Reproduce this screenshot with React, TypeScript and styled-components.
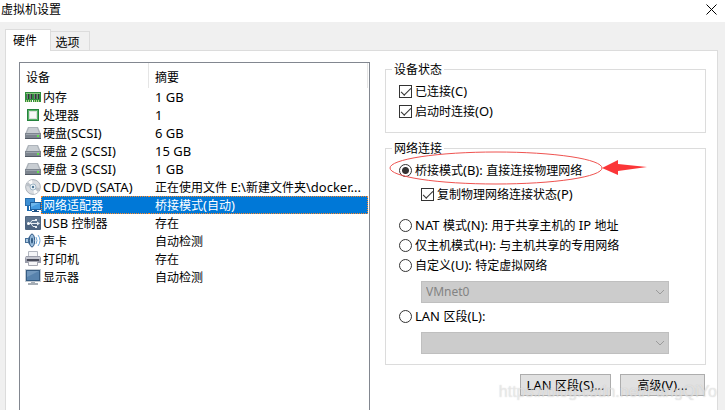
import React from "react";
import styled, { createGlobalStyle, css } from "styled-components";

const GlobalStyle = createGlobalStyle`
  * { box-sizing: border-box; }
  body {
    margin: 0;
    overflow: hidden;
    background: #f0f0f0;
    color: #000;
    font: 12px/18px "Noto Sans", "Noto Sans CJK SC", sans-serif;
  }
  button, input, select { font: inherit; color: inherit; margin: 0; }
`;

const Dialog = styled.main`
  position: relative;
  display: flex;
  flex-direction: column;
  height: 100vh;
  overflow: hidden;
`;

const TitleBar = styled.header`
  display: flex;
  align-items: center;
  justify-content: space-between;
  height: 22px;
  padding: 0 8px 3px 1px;
  flex: none;
  background: #fff;
`;

const Title = styled.h1`
  margin: 0;
  font-size: 12px;
  font-weight: 400;
`;

const CloseButton = styled.button`
  display: flex;
  width: 11px;
  height: 11px;
  padding: 0;
  border: 0;
  background: none;
`;

const TabBar = styled.div`
  display: flex;
  align-items: flex-end;
  flex: none;
  height: 29px;
  padding-left: 5px;
  position: relative;
  z-index: 1;
`;

const Tab = styled.button<{ $active?: boolean }>`
  padding: 0;
  border: 1px solid #dcdcdc;
  ${({ $active }) =>
    $active
      ? css`width: 46px; height: 22px; padding-right: 6px; border-bottom: 0; background: #fff;`
      : css`width: 39px; height: 20px; padding: 2px 5px 0 0; border-left: 0; background: #f0f0f0;`}
`;

const Panel = styled.section`
  flex: 1;
  display: grid;
  grid-template-columns: 351fr 321fr;
  column-gap: 15px;
  margin: -1px 7px 0 5px;
  padding: 11px 11px 0 13px;
  border: 1px solid #dcdcdc;
  border-bottom: 0;
  background: #fff;
`;

const DeviceList = styled.div`
  border: 1px solid #828790;
  border-bottom: 0;
  padding-right: 1px;
`;

const Table = styled.table`
  width: 100%;
  table-layout: fixed;
  border-collapse: separate;
  border-spacing: 0;
`;

const HeadCell = styled.th<{ $first?: boolean }>`
  width: ${({ $first }) => ($first ? "129px" : "auto")};
  height: 25px;
  padding: 4px 0 0 6px;
  border-right: 1px solid #e5e5e5;
  font-weight: 400;
  text-align: left;
`;

const Cell = styled.td`
  height: 18px;
  padding: 0;
`;

const DeviceName = styled.div`
  display: grid;
  grid-template-columns: 16px 1fr;
  padding-left: 5px;
`;

const CellText = styled.div<{ $selected?: boolean; $summary?: boolean }>`
  height: 18px;
  line-height: 20px;
  padding-left: ${({ $summary }) => ($summary ? "6px" : "2px")};
  overflow: hidden;
  white-space: nowrap;
  ${({ $selected, $summary }) =>
    $selected &&
    css`
      color: #fff;
      background: #0078d7;
      border: 1px dotted #ff8728;
      ${$summary ? "border-left: 0;" : "border-right: 0; padding-left: 1px;"}
      line-height: 18px;
    `}
`;

const Latin = styled.span`
  font-size: 13px;
  line-height: 1;
`;

const Settings = styled.div`
  display: flex;
  flex-direction: column;
  padding-top: 7px;
`;

const Group = styled.fieldset<{ $tall?: boolean }>`
  position: relative;
  min-width: 0;
  margin: 0 0 ${({ $tall }) => ($tall ? "9px" : "15px")};
  padding: ${({ $tall }) => ($tall ? "11px 36px 10px 13px" : "11px 13px 11px")};
  border: 1px solid #dcdcdc;
`;

const Legend = styled.legend`
  float: left;
  height: 18px;
  margin: -20px 0 0 -7px;
  padding: 0 2px;
  background: #fff;
`;

const Options = styled.div`
  clear: both;
  display: flex;
  flex-direction: column;
`;

const Option = styled.label<{ $space?: "nested" | "afterSelect" }>`
  display: flex;
  align-items: center;
  gap: 3px;
  height: 20px;
  white-space: nowrap;
  > span { padding-top: 2px; }
  ${({ $space }) => $space === "nested" && css`margin: 4px 0 11px 22px;`}
  ${({ $space }) => $space === "afterSelect" && css`margin-top: 3px;`}
`;

const CheckBox = styled.input`
  appearance: none;
  flex: none;
  display: block;
  width: 13px;
  height: 13px;
  border: 1px solid #333;
  background: #fff;
  &:checked::after {
    content: "";
    display: block;
    width: 9px;
    height: 4px;
    margin: 2px 0 0 1px;
    border: solid #333;
    border-width: 0 0 1px 1px;
    transform: rotate(-45deg);
  }
`;

const Radio = styled.input`
  appearance: none;
  flex: none;
  width: 13px;
  height: 13px;
  border: 1px solid #333;
  border-radius: 50%;
  background: #fff;
  &:checked {
    background: radial-gradient(circle, #333 3px, #fff 4px);
  }
`;

const SelectBox = styled.div`
  display: grid;
  align-items: center;
  height: 22px;
  margin: 6px 0 0 22px;
  > * { grid-area: 1 / 1; }
  > svg { justify-self: end; margin-right: 4px; pointer-events: none; }
`;

const Select = styled.select`
  appearance: none;
  width: 100%;
  height: 22px;
  padding: 0 4px;
  border: 1px solid #bfbfbf;
  border-radius: 0;
  background: #ccc;
  color: #838383;
  opacity: 1;
  font-size: 12px;
`;

const Actions = styled.div`
  display: flex;
  justify-content: flex-end;
  gap: 9px;
  padding-right: 1px;
`;

const ActionButton = styled.button<{ $wide?: boolean }>`
  width: ${({ $wide }) => ($wide ? "91px" : "85px")};
  height: 22px;
  padding: 2px 0 0;
  border: 1px solid #adadad;
  background: #e1e1e1;
  white-space: nowrap;
`;

const Annotation = styled.svg`
  position: absolute;
  left: 2px;
  top: 1px;
  pointer-events: none;
`;

const Watermark = styled.div`
  position: absolute;
  right: 8px;
  bottom: 8px;
  font: 16px/20px "Liberation Sans", sans-serif;
  color: rgba(255, 255, 255, 0.5);
  text-shadow: 0 0 1px rgba(150, 150, 150, 0.5);
  pointer-events: none;
`;

/* Chinese text is set at 12px; the Latin runs inside it are one pixel larger. */
const Mixed = ({ text }: { text: string }) => (
  <span>
    {text.split(/([\x20-\x7e]+)/).map((part, i) =>
      i % 2 ? <Latin key={i}>{part}</Latin> : part
    )}
  </span>
);

type IconName = "memory" | "cpu" | "disk" | "disc" | "network" | "usb" | "sound" | "printer" | "display";

const drawings: Record<IconName, React.ReactNode> = {
  memory: (
    <>
      <path d="M0 4h16v10H0z" fill="#2f8d3d" />
      <path d="M1 5h14v1H1z" fill="#86c97c" />
      <path d="M2 6h2v5H2zM5 6h2v5H5zM9 6h2v5H9zM12 6h2v5h-2z" fill="#33363a" />
      <path d="M2 6h1v5H2zM5 6h1v5H5zM9 6h1v5H9zM12 6h1v5h-1z" fill="#777d80" />
      <path d="M1 12h1v2H1zM3 12h1v2H3zM5 12h1v2H5zM9 12h1v2H9zM11 12h1v2h-1zM13 12h1v2h-1z" fill="#b5d68a" />
      <path d="M7 12h1v2H7z" fill="#fff" />
    </>
  ),
  cpu: (
    <>
      <path d="M2 3h12v12H2z" fill="#25833d" />
      <path d="M3 4h10v10H3z" fill="#58b167" />
      <path d="M4 5h8v8H4z" fill="#d9dedb" />
      <path d="M5 6h6v6H5z" fill="#f6f8f6" />
    </>
  ),
  disk: (
    <>
      <path d="M3 3h10l3 7H0z" fill="#aeb4bb" />
      <path d="M4 4h8l2 5H2z" fill="#c9ced3" />
      <path d="M0 9h16v6H0z" fill="#7d858f" />
      <path d="M1 10h14v1H1z" fill="#9da5ae" />
      <path d="M0 14h16v1H0z" fill="#515964" />
      <path d="M12 11h2v2h-2z" fill="#62e04c" />
    </>
  ),
  disc: (
    <>
      <circle cx="8" cy="9" r="7.4" fill="#d9dce0" stroke="#9ca3ac" strokeWidth=".8" />
      <path d="M8 9 2 5a7 7 0 0 1 5-3zM8 9l6 4a7 7 0 0 1-5 3z" fill="#fafafa" />
      <path d="M8 9 1.2 8A7 7 0 0 1 3 4zM8 9l6.8 1a7 7 0 0 1-1.8 4z" fill="#bcc2c9" />
      <circle cx="8" cy="9" r="3" fill="#eef4f8" stroke="#8faabd" strokeWidth=".8" />
      <circle cx="8" cy="9" r="1.2" fill="#4d7594" />
    </>
  ),
  network: (
    <>
      <path d="M0 2h10v8H0z" fill="#2a6fae" />
      <path d="M1 3h8v6H1z" fill="#3d8fd3" />
      <path d="M2 10h2v4h3v1H2z" fill="#1c6ab0" />
      <path d="M5 6h11v8H5z" fill="#1f5f9d" />
      <path d="M6 7h9v6H6z" fill="#459be0" />
      <path d="M6 7h9l-9 4z" fill="#70b8ed" />
      <path d="M9 14h3v1h2v1H7v-1h2z" fill="#1b5084" />
    </>
  ),
  usb: (
    <>
      <rect y="2" width="16" height="14" rx="1" fill="#4d6480" />
      <path d="M1 3h14v6H1z" fill="#5d7590" />
      <path d="M3 9.500h9M5 9.500l2-3h3M6 9.500l2 3h2" fill="none" stroke="#e8edf2" />
      <circle cx="3.5" cy="9.500" r="1.500" fill="#fff" />
      <path d="m12 7.500 3 2-3 2zM10 5h2v2h-2zM10 12h2v2h-2z" fill="#e8edf2" />
    </>
  ),
  sound: (
    <>
      <path d="M0 6h3l4-4q3 6 0 13l-4-4H0z" fill="#48719a" />
      <path d="M1 7h2v3H1z" fill="#a9c7e1" />
      <ellipse cx="7" cy="8.5" rx="2.7" ry="6.5" fill="#9bbedd" stroke="#365d87" />
      <ellipse cx="7" cy="8.5" rx="1" ry="3" fill="#2c567f" />
      <path d="M11 5q2 3.5 0 7M13 3q4 5.500 0 11" fill="none" stroke="#6ea6d6" />
    </>
  ),
  printer: (
    <>
      <path d="M3.500 1.500h9v6h-9z" fill="#f4f5f7" stroke="#b2b6bf" />
      <path d="M1 6h14l1 2v5H0V8z" fill="#9a9daa" />
      <path d="M1 7h14v2H1z" fill="#c5c7d0" />
      <path d="M2 9h12v2H2z" fill="#484b59" />
      <path d="M3.500 11.500h9v4h-9z" fill="#f6f6f8" stroke="#a5a7b1" />
    </>
  ),
  display: (
    <>
      <path d="M0 1h16v13H0z" fill="#c3cbd3" />
      <path d="M1 2h14v11H1z" fill="#365d84" />
      <path d="M2 3h12v9H2z" fill="#5883ad" />
      <path d="M2 3h12L2 9z" fill="#7298bd" />
      <path d="M6 14h4v1h3v2H3v-2h3z" fill="#a5adb5" />
    </>
  ),
};

const Icon = ({ name }: { name: IconName }) => (
  <svg width="16" height="18" viewBox="0 0 16 18" aria-hidden="true">
    {drawings[name]}
  </svg>
);

const Chevron = () => (
  <svg width="10" height="6" viewBox="0 0 10 6" fill="none" stroke="#9b9b9b" aria-hidden="true">
    <path d="m1 1 4 4 4-4" />
  </svg>
);

const devices: { icon: IconName; name: string; summary: string; selected?: boolean }[] = [
  { icon: "memory", name: "内存", summary: "1 GB" },
  { icon: "cpu", name: "处理器", summary: "1" },
  { icon: "disk", name: "硬盘(SCSI)", summary: "6 GB" },
  { icon: "disk", name: "硬盘 2 (SCSI)", summary: "15 GB" },
  { icon: "disk", name: "硬盘 3 (SCSI)", summary: "1 GB" },
  { icon: "disc", name: "CD/DVD (SATA)", summary: "正在使用文件 E:\\新建文件夹\\docker..." },
  { icon: "network", name: "网络适配器", summary: "桥接模式(自动)", selected: true },
  { icon: "usb", name: "USB 控制器", summary: "存在" },
  { icon: "sound", name: "声卡", summary: "自动检测" },
  { icon: "printer", name: "打印机", summary: "存在" },
  { icon: "display", name: "显示器", summary: "自动检测" },
];

export default function App() {
  return (
    <Dialog>
      <GlobalStyle />
      <TitleBar>
        <Title>虚拟机设置</Title>
        <CloseButton aria-label="关闭">
          <svg width="11" height="11" viewBox="0 0 11 11" stroke="#000" fill="none">
            <path d="m.5.5 10 10m0-10-10 10" />
          </svg>
        </CloseButton>
      </TitleBar>
      <TabBar role="tablist">
        <Tab role="tab" aria-selected="true" $active>硬件</Tab>
        <Tab role="tab" aria-selected="false">选项</Tab>
      </TabBar>
      <Panel>
        <DeviceList>
          <Table>
            <thead>
              <tr>
                <HeadCell $first>设备</HeadCell>
                <HeadCell>摘要</HeadCell>
              </tr>
            </thead>
            <tbody>
              {devices.map((d) => (
                <tr key={d.name}>
                  <Cell>
                    <DeviceName>
                      <Icon name={d.icon} />
                      <CellText $selected={d.selected}><Mixed text={d.name} /></CellText>
                    </DeviceName>
                  </Cell>
                  <Cell>
                    <CellText $summary $selected={d.selected}><Mixed text={d.summary} /></CellText>
                  </Cell>
                </tr>
              ))}
            </tbody>
          </Table>
        </DeviceList>
        <Settings>
          <Group>
            <Legend>设备状态</Legend>
            <Options>
              <Option><CheckBox type="checkbox" defaultChecked /><Mixed text="已连接(C)" /></Option>
              <Option><CheckBox type="checkbox" defaultChecked /><Mixed text="启动时连接(O)" /></Option>
            </Options>
          </Group>
          <Group $tall>
            <Legend>网络连接</Legend>
            <Options>
              <Option><Radio type="radio" name="net" defaultChecked /><Mixed text="桥接模式(B): 直接连接物理网络" /></Option>
              <Option $space="nested"><CheckBox type="checkbox" defaultChecked /><Mixed text="复制物理网络连接状态(P)" /></Option>
              <Option><Radio type="radio" name="net" /><Mixed text="NAT 模式(N): 用于共享主机的 IP 地址" /></Option>
              <Option><Radio type="radio" name="net" /><Mixed text="仅主机模式(H): 与主机共享的专用网络" /></Option>
              <Option><Radio type="radio" name="net" /><Mixed text="自定义(U): 特定虚拟网络" /></Option>
              <SelectBox>
                <Select disabled aria-label="自定义虚拟网络"><option>VMnet0</option></Select>
                <Chevron />
              </SelectBox>
              <Option $space="afterSelect"><Radio type="radio" name="net" /><Mixed text="LAN 区段(L):" /></Option>
              <SelectBox>
                <Select disabled aria-label="LAN 区段"><option></option></Select>
                <Chevron />
              </SelectBox>
            </Options>
            <Annotation width="262" height="36" viewBox="0 0 262 36" aria-hidden="true">
              <ellipse cx="108" cy="18" rx="106" ry="16" fill="none" stroke="#ef5350" />
              <path d="m214 18 16-8v4l29 3-29 4v4z" fill="#fb3638" />
            </Annotation>
          </Group>
          <Actions>
            <ActionButton $wide><Mixed text="LAN 区段(S)..." /></ActionButton>
            <ActionButton><Mixed text="高级(V)..." /></ActionButton>
          </Actions>
        </Settings>
      </Panel>
      <Watermark>https://blog.csdn.net/FangQiYo</Watermark>
    </Dialog>
  );
}
